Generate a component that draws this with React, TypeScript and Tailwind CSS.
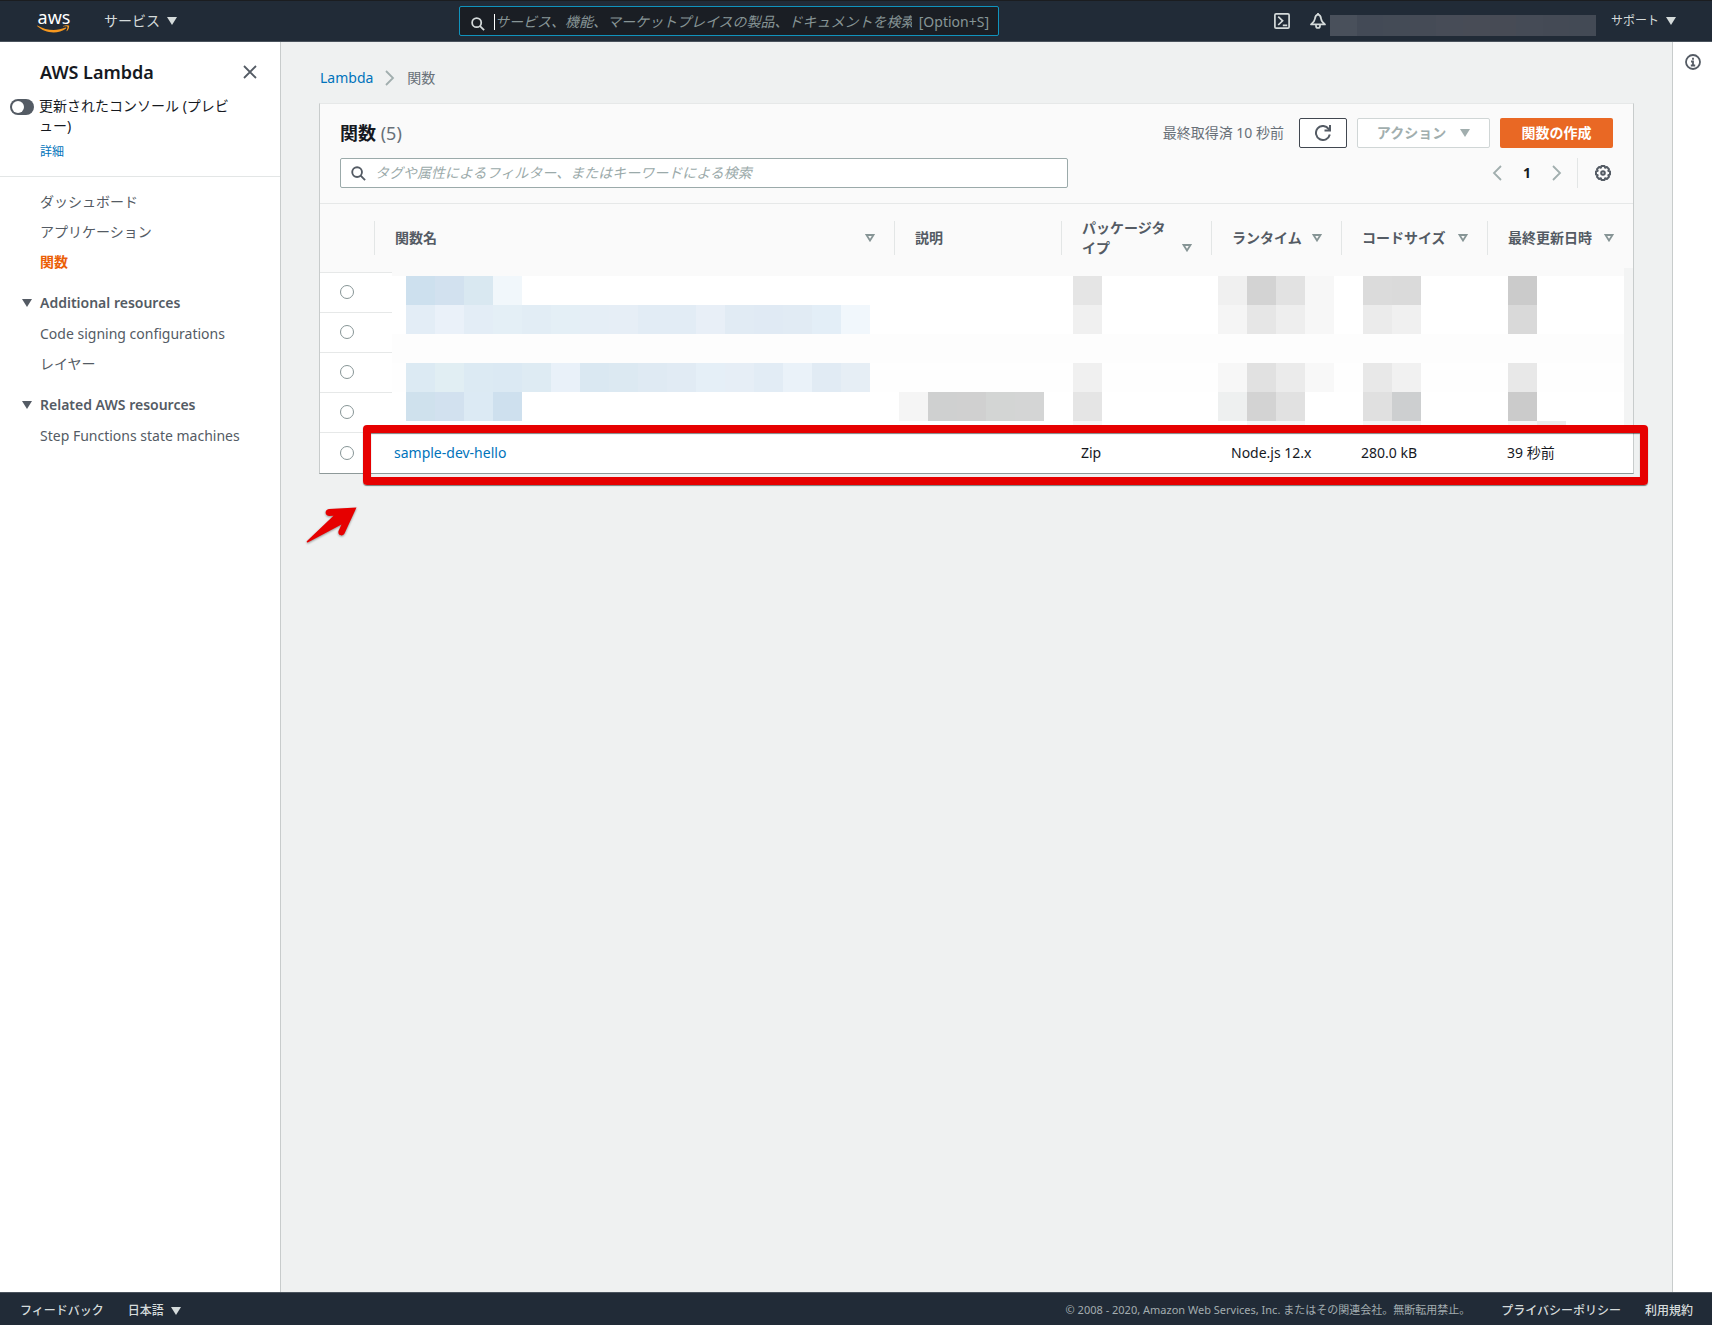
import { type ReactNode } from "react";
import clsx from "clsx";

type Block = { at: number; colors: string[] };

// Each blurred row is a run of 29px blocks, "at" is the column the run starts in.
const BLUR_ROWS: { height: string; base: string; blocks: Block[] }[] = [
  { height: "h-2", base: "#fafafa", blocks: [{ at: 42, colors: ["#f3f4f4"] }] },
  {
    height: "h-[29px]",
    base: "#ffffff",
    blocks: [
      { at: 0, colors: ["#cde0ee", "#d2e1ef", "#d9e8f1", "#f1f7fb"] },
      { at: 23, colors: ["#e5e5e5"] },
      { at: 28, colors: ["#f0f0f0", "#d3d3d3", "#e2e2e2", "#f7f7f7"] },
      { at: 33, colors: ["#dbdbdb", "#dadada"] },
      { at: 38, colors: ["#cbcbcb"] },
      { at: 42, colors: ["#f3f4f4"] },
    ],
  },
  {
    height: "h-[29px]",
    base: "#ffffff",
    blocks: [
      {
        at: 0,
        colors: [
          "#e3edf6", "#eaf1f9", "#e3edf6", "#e4eff6", "#e2edf5", "#e4eff6", "#e5eef6", "#e6eef6",
          "#e2ecf5", "#e2ecf5", "#e8eff7", "#e1ebf4", "#e0eaf4", "#e1ebf4", "#e3eef7", "#f1f7fc",
        ],
      },
      { at: 23, colors: ["#f0f0f0"] },
      { at: 28, colors: ["#f5f5f5", "#e6e6e6", "#eeeeee", "#f7f7f7"] },
      { at: 33, colors: ["#ebebeb", "#f0f0f0"] },
      { at: 38, colors: ["#d9d9d9"] },
      { at: 42, colors: ["#f3f4f4"] },
    ],
  },
  { height: "h-[29px]", base: "#fdfdfd", blocks: [{ at: 42, colors: ["#f3f4f4"] }] },
  {
    height: "h-[29px]",
    base: "#fefefe",
    blocks: [
      {
        at: 0,
        colors: [
          "#dceaf3", "#e1eef3", "#dceaf3", "#dbe9f3", "#deebf3", "#e9f1f9", "#dae8f2", "#dce9f2",
          "#dfeaf3", "#e1ebf4", "#e5eff7", "#e6eef6", "#e2ecf5", "#eaf2f9", "#e1ebf4", "#e6eef5",
        ],
      },
      { at: 23, colors: ["#f0f0f0"] },
      { at: 28, colors: ["#f7f7f7", "#e1e1e1", "#ebebeb", "#f8f8f8"] },
      { at: 33, colors: ["#e8e8e8", "#f1f1f1"] },
      { at: 38, colors: ["#e8e8e8"] },
      { at: 42, colors: ["#f3f4f4"] },
    ],
  },
  {
    height: "h-[29px]",
    base: "#ffffff",
    blocks: [
      { at: 0, colors: ["#cfe1ed", "#d2e1ef", "#dceaf4", "#cee0ee"] },
      { at: 17, colors: ["#f5f5f5", "#cfd0d0", "#d0d0d0", "#d3d5d4", "#d4d5d5"] },
      { at: 23, colors: ["#e5e5e5"] },
      { at: 28, colors: ["#eef0f0", "#d3d3d3", "#e1e1e1"] },
      { at: 33, colors: ["#e0e0e0", "#cdcfd0"] },
      { at: 38, colors: ["#cbcbcb"] },
      { at: 42, colors: ["#f3f4f4"] },
    ],
  },
  {
    height: "h-1",
    base: "#fefefe",
    blocks: [
      { at: 23, colors: ["#f5f5f5"] },
      { at: 29, colors: ["#f5f5f5", "#f5f5f5"] },
      { at: 33, colors: ["#f3f3f3", "#f3f3f3"] },
      { at: 38, colors: ["#f5f5f5", "#ebebeb"] },
      { at: 42, colors: ["#f3f4f4"] },
    ],
  },
];

const ACCOUNT_BLOCKS = [
  "#49505b", "#434a56", "#444b56", "#454b56", "#474c57", "#484c56", "#474b55", "#454b56", "#444a55", "#434a55",
];

const COLUMNS = [
  { label: "関数名", width: "", sortable: true },
  { label: "説明", width: "w-[167px]", sortable: false },
  { label: "パッケージタイプ", width: "w-[150px]", sortable: true },
  { label: "ランタイム", width: "w-[130px]", sortable: true },
  { label: "コードサイズ", width: "w-[146px]", sortable: true },
  { label: "最終更新日時", width: "w-[146px]", sortable: true },
];

function Caret() {
  return (
    <svg viewBox="0 0 10 8" className="h-2 w-[10px] shrink-0" fill="currentColor" aria-hidden="true">
      <path d="M0 0h10L5 8z" />
    </svg>
  );
}

function SearchIcon({ className }: { className?: string }) {
  return (
    <svg viewBox="0 0 16 16" className={clsx("shrink-0", className)} fill="none" stroke="currentColor" strokeWidth="2" aria-hidden="true">
      <circle cx="6.5" cy="6.5" r="5.2" />
      <path d="M10.3 10.3 15 15" />
    </svg>
  );
}

function AwsLogo() {
  return (
    <a href="#" aria-label="aws" className="relative flex h-6 w-9 flex-col items-center text-white">
      <span className="text-lg leading-4">aws</span>
      <svg viewBox="0 0 34 8" className="absolute bottom-0 h-2 w-[34px]" fill="#f7981f" aria-hidden="true">
        <path d="M.3 1.2c-.3-.5.1-.8.6-.5C5.5 3.4 11 5 16.700 5c3.900 0 8-.8 11.800-2.400.6-.3 1.100.4.5.8C25.600 5.900 20.900 7.400 16.600 7.400 10.400 7.400 4.700 5 .3 1.200z" />
        <path d="M30.400 1.700c-.5-.6-3-.3-4.100-.1-.4 0-.4-.3-.1-.5 2-1.400 5.400-1 5.800-.5.4.5-.1 3.900-2 5.500-.3.3-.6.1-.5-.2.4-1.100 1.400-3.600.9-4.200z" />
      </svg>
    </a>
  );
}

function Header() {
  return (
    <header className="grid h-[42px] shrink-0 grid-cols-[459px_540px_1fr] items-center border-t border-b border-t-[#1b1d20] border-b-[#4a535d] bg-[#212b37] text-[#d5dbdb]">
      <div className="flex items-center gap-8 pl-9">
        <AwsLogo />
        <button className="flex items-center gap-[7px] text-sm leading-5">
          サービス
          <Caret />
        </button>
      </div>
      <label className="flex h-[30px] items-center rounded-xs border border-[#1093bd] bg-[#1a1e24] pt-[2px] pr-[9px] pl-[11px] text-sm">
        <SearchIcon className="mt-1 size-[14px] text-[#d5dbdb]" />
        <span className="ml-[9px] h-4 w-px bg-white" />
        <input
          type="text"
          aria-label="検索"
          placeholder="サービス、機能、マーケットプレイスの製品、ドキュメントを検索"
          className="min-w-0 flex-1 italic outline-none placeholder:text-[#879596]"
        />
        <span className="ml-[7px] shrink-0 text-[#879596]">[Option+S]</span>
      </label>
      <div className="flex items-center justify-end pr-9">
        <button aria-label="CloudShell">
          <svg viewBox="0 0 16 16" className="size-4" fill="none" stroke="currentColor" strokeWidth="1.7" aria-hidden="true">
            <rect x=".9" y=".9" width="14.2" height="14.2" rx="1.2" />
            <path d="M4.200 3.600 8.600 7.800l-4.400 4.200M8.800 12.400h4.400" />
          </svg>
        </button>
        <button aria-label="通知" className="ml-5">
          <svg viewBox="0 0 16 16" className="size-4" fill="none" stroke="currentColor" strokeWidth="1.7" strokeLinejoin="round" aria-hidden="true">
            <path d="M8 1.400C5.900 2 5.100 3.800 4.900 5.900c-.2 2.200-1.500 3.700-3.900 5.500h14c-2.400-1.800-3.700-3.300-3.900-5.500C10.900 3.800 10.100 2 8 1.400z" />
            <path d="M6 11.600v1.400a2 2 0 0 0 4 0v-1.400M8 0v1.500" />
          </svg>
        </button>
        <div className="ml-1 flex w-[266px] pt-2">
          {ACCOUNT_BLOCKS.map((color, i) => (
            <span key={i} className="h-[21px] flex-1" style={{ backgroundColor: color }} />
          ))}
        </div>
        <button className="ml-[15px] flex items-center gap-[7px] text-xs">
          サポート
          <Caret />
        </button>
      </div>
    </header>
  );
}

function NavGroup({ title, children }: { title: string; children: ReactNode }) {
  return (
    <section className="mt-[21px]">
      <button className="flex items-center gap-2 pl-[22px] text-sm leading-5 font-semibold">
        <Caret />
        {title}
      </button>
      <ul className="mt-[11px] flex flex-col gap-[10px] pl-10">{children}</ul>
    </section>
  );
}

function Sidebar() {
  return (
    <aside className="w-[281px] shrink-0 border-r border-[#c8cccc] bg-white text-sm leading-5 text-[#545b64]">
      <div className="flex items-center justify-between pt-5 pr-[23px] pl-10 text-[#16191f]">
        <h2 className="text-lg leading-5 font-semibold">AWS Lambda</h2>
        <button aria-label="閉じる" className="text-[#545b64]">
          <svg viewBox="0 0 14 14" className="size-[14px]" fill="none" stroke="currentColor" strokeWidth="1.8" aria-hidden="true">
            <path d="m1 1 12 12M13 1 1 13" />
          </svg>
        </button>
      </div>
      <div className="border-b border-[#e3e6e6] py-[14px]">
        <label className="flex gap-[5px] pr-10 pl-[10px] text-[#16191f]">
          <input type="checkbox" role="switch" className="peer sr-only" />
          <span className="mt-[3px] flex h-4 w-6 shrink-0 items-center rounded-full bg-[#545b64] px-[2px]">
            <span className="size-3 rounded-full bg-white" />
          </span>
          <span>更新されたコンソール (プレビュー)</span>
        </label>
        <a href="#" className="mt-[6px] ml-10 block text-xs leading-5 text-[#0073bb]">
          詳細
        </a>
      </div>
      <nav>
        <ul className="flex flex-col gap-[10px] pt-[15px] pl-10">
          <li><a href="#">ダッシュボード</a></li>
          <li><a href="#">アプリケーション</a></li>
          <li><a href="#" className="font-bold text-[#eb5f07]">関数</a></li>
        </ul>
        <NavGroup title="Additional resources">
          <li><a href="#">Code signing configurations</a></li>
          <li><a href="#">レイヤー</a></li>
        </NavGroup>
        <NavGroup title="Related AWS resources">
          <li><a href="#">Step Functions state machines</a></li>
        </NavGroup>
      </nav>
    </aside>
  );
}

function Chevron({ flip, className }: { flip?: boolean; className?: string }) {
  return (
    <svg viewBox="0 0 10 16" className={clsx("h-4 w-[10px]", className)} fill="none" stroke="currentColor" strokeWidth="1.8" aria-hidden="true">
      <path d={flip ? "M9 1 2 8l7 7" : "m1 1 7 7-7 7"} />
    </svg>
  );
}

function PanelHeader() {
  return (
    <div className="border-b border-[#e6e8e8] bg-[#fafafa] px-5 pt-[14px] pb-[15px]">
      <div className="flex items-center gap-[10px]">
        <h1 className="mr-auto text-lg font-bold text-[#16191f]">
          関数 <span className="font-normal text-[#687078]">(5)</span>
        </h1>
        <span className="mr-[5px] text-sm text-[#687078]">最終取得済 10 秒前</span>
        <button aria-label="更新" className="flex h-[30px] w-12 items-center justify-center rounded-xs border border-[#414750] bg-white text-[#545b64]">
          <svg viewBox="0 0 16 16" className="size-4" fill="none" stroke="currentColor" strokeWidth="2" aria-hidden="true">
            <path d="M14.800 9.500A7 7 0 1 1 13.600 3.800L15 5.500" />
            <path d="M15 0v5.500H9.500" />
          </svg>
        </button>
        <button disabled className="flex h-[30px] w-[133px] items-center justify-center gap-[14px] rounded-xs border border-[#d0d6d6] bg-white text-sm font-bold text-[#a1aeae]">
          アクション
          <Caret />
        </button>
        <button className="h-[30px] w-[113px] rounded-xs bg-[#e96824] text-sm font-bold text-white">関数の作成</button>
      </div>
      <div className="mt-[10px] flex items-center justify-between">
        <label className="flex h-[30px] w-[728px] items-center rounded-xs border border-[#9baaaa] bg-white px-[10px] text-sm">
          <SearchIcon className="size-[15px] text-[#545b64]" />
          <input
            type="text"
            aria-label="フィルター"
            placeholder="タグや属性によるフィルター、またはキーワードによる検索"
            className="ml-[9px] min-w-0 flex-1 italic outline-none placeholder:text-[#9baaaa]"
          />
        </label>
        <div className="flex items-center pr-[2px] text-[#a1aeae]">
          <button aria-label="前のページ"><Chevron flip /></button>
          <button className="w-[50px] text-sm font-bold text-[#16191f]">1</button>
          <button aria-label="次のページ"><Chevron /></button>
          <span className="ml-[15px] h-[30px] w-px bg-[#e3e6e6]" />
          <button aria-label="設定" className="ml-[17px] text-[#545b64]">
            <svg viewBox="0 0 16 16" className="size-4" fill="none" stroke="currentColor" strokeWidth="2" strokeLinejoin="round" aria-hidden="true">
              <path d="M6.500 1h3l.6 1.700 1.800-.7 2.100 2.100-.7 1.800 1.700.6v3l-1.700.6.7 1.800-2.100 2.100-1.800-.7-.6 1.700h-3l-.6-1.700-1.800.7L2 11.900l.7-1.800L1 9.500v-3l1.700-.6L2 4.100 4.100 2l1.800.7z" />
              <circle cx="8" cy="8" r="1.800" />
            </svg>
          </button>
        </div>
      </div>
    </div>
  );
}

function BlurredRows() {
  return (
    <div className="pointer-events-none absolute top-16 right-0 left-[72px] overflow-hidden" aria-hidden="true">
      {BLUR_ROWS.map((row, i) => (
        <div
          key={i}
          className={clsx("grid grid-cols-[14px_repeat(43,29px)]", row.height)}
          style={{ backgroundColor: row.base }}
        >
          {row.blocks.map(({ at, colors }) =>
            colors.map((color, j) => (
              <span key={`${at}-${j}`} className="row-start-1" style={{ gridColumnStart: at + j + 2, backgroundColor: color }} />
            )),
          )}
        </div>
      ))}
    </div>
  );
}

function FunctionsTable() {
  return (
    <div className="relative">
      <table className="w-full table-fixed text-left text-sm text-[#16191f]">
        <thead className="bg-[#fafafa] text-[#545b64]">
          <tr className="h-[68px]">
            <th className="w-[54px]" />
            {COLUMNS.map(({ label, width, sortable }) => (
              <th key={label} className={clsx("p-0", width)}>
                <div className="flex h-[34px] items-center justify-between border-l border-[#e3e6e6] pr-[19px] pl-5 leading-5">
                  <span className={label === "パッケージタイプ" ? "w-[86px]" : "whitespace-nowrap"}>{label}</span>
                  {sortable && (
                    <svg
                      viewBox="0 0 10 8"
                      className={clsx("h-2 w-[10px] shrink-0", label === "パッケージタイプ" && "mb-[3px] self-end")}
                      fill="none"
                      stroke="#879596"
                      strokeWidth="1.8"
                      aria-hidden="true"
                    >
                      <path d="M1.500 1h7L5 6.500z" />
                    </svg>
                  )}
                </div>
              </th>
            ))}
          </tr>
        </thead>
        <tbody>
          {[0, 1, 2, 3].map((row) => (
            <tr key={row} className="h-10 border-t border-[#e6e8e8]">
              <td className="pl-5">
                <input type="radio" name="function" aria-label={`関数 ${row + 1}`} className="block size-[14px] appearance-none rounded-full border border-[#879596]" />
              </td>
              <td colSpan={6} />
            </tr>
          ))}
          <tr className="h-[41px] border-t border-[#e6e8e8]">
            <td className="pl-5">
              <input type="radio" name="function" aria-label="sample-dev-hello" className="block size-[14px] appearance-none rounded-full border border-[#879596]" />
            </td>
            <td className="pl-5"><a href="#" className="text-[#0073bb]">sample-dev-hello</a></td>
            <td />
            <td className="pl-5">Zip</td>
            <td className="pl-5">Node.js 12.x</td>
            <td className="pl-5">280.0 kB</td>
            <td className="pl-5">39 秒前</td>
          </tr>
        </tbody>
      </table>
      <BlurredRows />
      <div className="pointer-events-none absolute -right-[15px] -bottom-3 left-[43px] h-[60px] rounded-sm border-8 border-[#e60000] shadow-[0_1px_1px_rgba(0,0,0,0.5),inset_0_1px_1px_rgba(0,0,0,0.5)]" />
      <svg viewBox="0 0 52 38" className="absolute -bottom-[71px] -left-[15px] h-[38px] w-[52px] drop-shadow-[0_1px_1px_rgba(0,0,0,0.4)]" aria-hidden="true">
        <path d="M51.500 1.500 24 3c-4.500.5-4.500 6.500 0 7l4.500-.2L2 35c-.8 1.200.2 1.800 1.200 1.200L36.500 18.500l-3 6.500c-1 4.500 4 6 6 2.500z" fill="#e60000" />
      </svg>
    </div>
  );
}

function Main() {
  return (
    <main className="min-w-0 flex-1 px-[38px]">
      <nav className="flex items-center gap-3 pt-[26px] pl-px text-sm leading-5 text-[#687078]">
        <a href="#" className="text-[#0073bb]">Lambda</a>
        <Chevron className="text-[#a1aeae]" />
        <span>関数</span>
      </nav>
      <div className="mt-[15px] border border-t-[#e6e8e8] border-r-[#c8cccc] border-b-[#8d9999] border-l-[#c8cccc] bg-white">
        <PanelHeader />
        <FunctionsTable />
      </div>
    </main>
  );
}

function Footer() {
  return (
    <footer className="flex h-[33px] shrink-0 items-center border-t border-[#4a535d] bg-[#212b37] pt-[3px] pr-[19px] pl-5 text-xs font-medium text-[#d5dbdb]">
      <a href="#">フィードバック</a>
      <button className="ml-6 flex items-center gap-[7px]">
        日本語
        <Caret />
      </button>
      <span className="ml-auto text-[11px] font-normal text-[#a3adb0]">
        © 2008 - 2020, Amazon Web Services, Inc. またはその関連会社。無断転用禁止。
      </span>
      <a href="#" className="ml-[31px]">プライバシーポリシー</a>
      <a href="#" className="ml-6">利用規約</a>
    </footer>
  );
}

export default function App() {
  return (
    <div className="flex min-h-screen flex-col bg-[#eff1f1] font-['Noto_Sans','Noto_Sans_CJK_JP',sans-serif]">
      <Header />
      <div className="flex flex-1">
        <Sidebar />
        <Main />
        <aside className="w-10 shrink-0 border-l border-[#c8cccc] bg-white pt-3 pl-3">
          <button aria-label="情報" className="block text-[#545b64]">
            <svg viewBox="0 0 16 16" className="size-4" fill="none" stroke="currentColor" strokeWidth="1.8" aria-hidden="true">
              <circle cx="8" cy="8" r="7" />
              <path d="M8 3.800v2M6 7.500h2v4M5.800 11.500h4.400" />
            </svg>
          </button>
        </aside>
      </div>
      <Footer />
    </div>
  );
}
